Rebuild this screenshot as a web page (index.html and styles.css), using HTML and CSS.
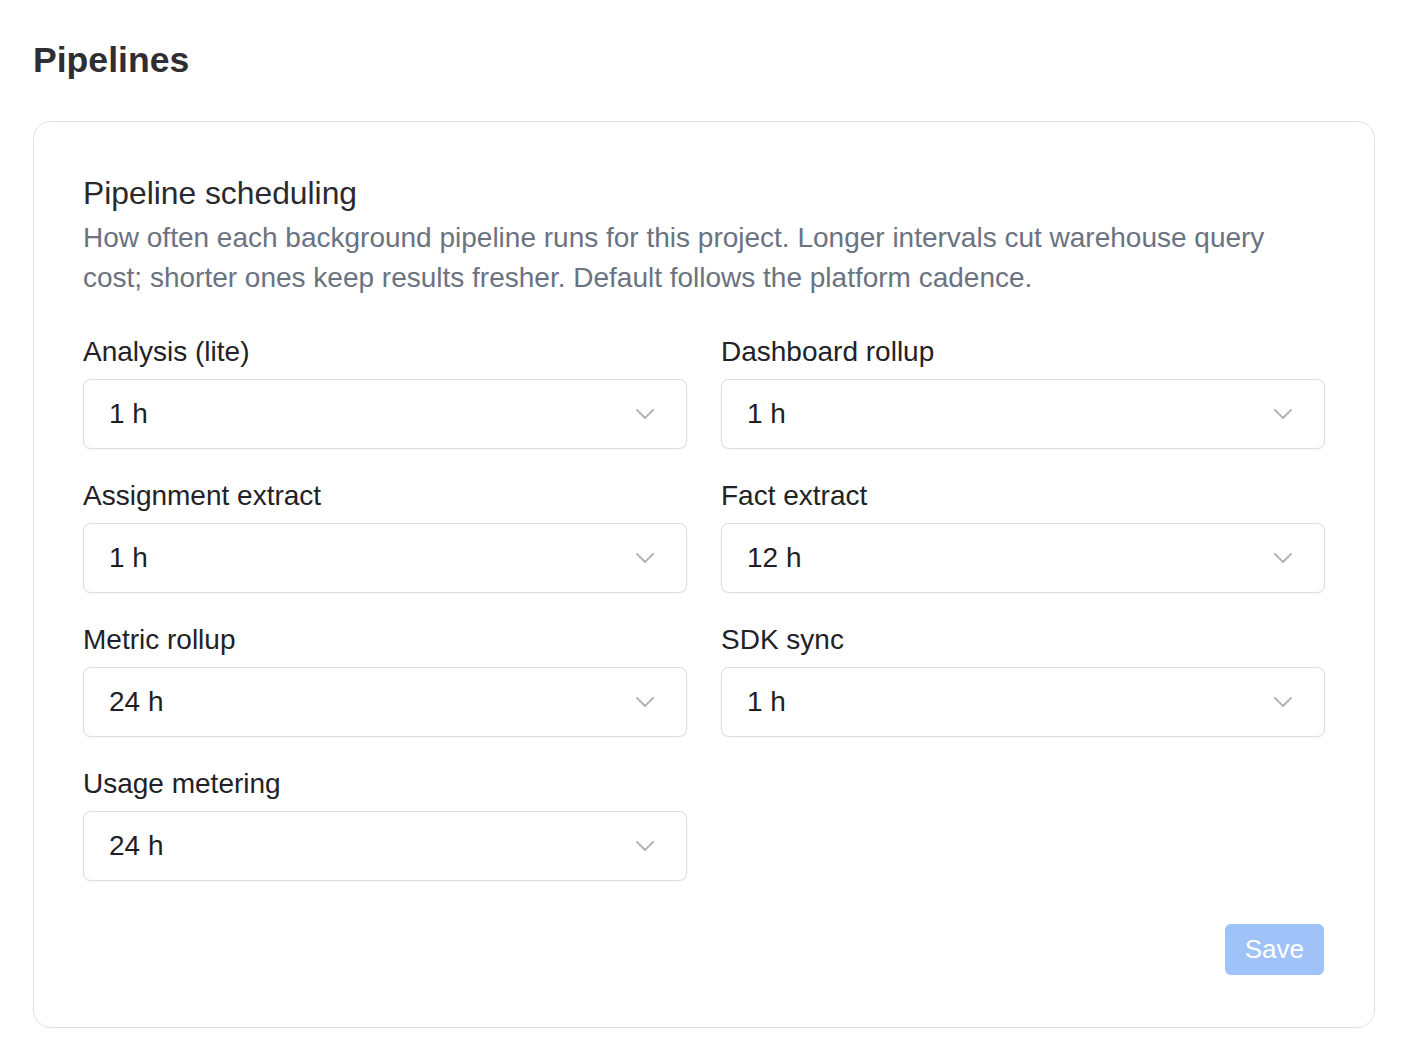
FILE: index.html
```html
<!DOCTYPE html>
<html lang="en">
<head>
<meta charset="utf-8">
<title>Pipelines</title>
<link rel="stylesheet" href="styles.css">
</head>
<body>
<main class="page">
  <h1 class="page-title">Pipelines</h1>

  <section class="card">
    <h2 class="card-title">Pipeline scheduling</h2>
    <p class="card-desc">How often each background pipeline runs for this project. Longer intervals cut warehouse query cost; shorter ones keep results fresher. Default follows the platform cadence.</p>

    <div class="fields">
      <div class="field">
        <label class="field-label">Analysis (lite)</label>
        <button class="select" type="button"><span>1 h</span><svg class="chev" viewBox="0 0 20 12" aria-hidden="true"><path d="M2 2l8 8 8-8"/></svg></button>
      </div>
      <div class="field">
        <label class="field-label">Dashboard rollup</label>
        <button class="select" type="button"><span>1 h</span><svg class="chev" viewBox="0 0 20 12" aria-hidden="true"><path d="M2 2l8 8 8-8"/></svg></button>
      </div>
      <div class="field">
        <label class="field-label">Assignment extract</label>
        <button class="select" type="button"><span>1 h</span><svg class="chev" viewBox="0 0 20 12" aria-hidden="true"><path d="M2 2l8 8 8-8"/></svg></button>
      </div>
      <div class="field">
        <label class="field-label">Fact extract</label>
        <button class="select" type="button"><span>12 h</span><svg class="chev" viewBox="0 0 20 12" aria-hidden="true"><path d="M2 2l8 8 8-8"/></svg></button>
      </div>
      <div class="field">
        <label class="field-label">Metric rollup</label>
        <button class="select" type="button"><span>24 h</span><svg class="chev" viewBox="0 0 20 12" aria-hidden="true"><path d="M2 2l8 8 8-8"/></svg></button>
      </div>
      <div class="field">
        <label class="field-label">SDK sync</label>
        <button class="select" type="button"><span>1 h</span><svg class="chev" viewBox="0 0 20 12" aria-hidden="true"><path d="M2 2l8 8 8-8"/></svg></button>
      </div>
      <div class="field">
        <label class="field-label">Usage metering</label>
        <button class="select" type="button"><span>24 h</span><svg class="chev" viewBox="0 0 20 12" aria-hidden="true"><path d="M2 2l8 8 8-8"/></svg></button>
      </div>
    </div>

    <div class="actions">
      <button class="btn-save" type="button" disabled>Save</button>
    </div>
  </section>
</main>
</body>
</html>
```

FILE: styles.css
```css
* {
  box-sizing: border-box;
}

html,
body {
  margin: 0;
  padding: 0;
  background: #ffffff;
}

body {
  font-family: "Liberation Sans", Arial, Helvetica, sans-serif;
  color: #222226;
}

.page {
  padding: 40px 33px 0 33px;
}

.page-title {
  margin: 0 0 41px 0;
  font-size: 35.6px;
  line-height: 40px;
  font-weight: 700;
  color: #2f2f33;
}

.card {
  border: 1px solid #e0e0e6;
  border-radius: 18px;
  padding: 49px 49px 52px 49px;
  background: #ffffff;
}

.card-title {
  margin: 0;
  font-size: 31.8px;
  line-height: 44px;
  font-weight: 400;
  color: #2a2a2e;
}

.card-desc {
  margin: 3px 0 0 0;
  font-size: 28px;
  line-height: 40px;
  color: #6b7280;
}

.fields {
  display: grid;
  grid-template-columns: 1fr 1fr;
  column-gap: 34px;
  row-gap: 30px;
  margin-top: 37px;
}

.field {
  display: flex;
  flex-direction: column;
  gap: 10px;
}

.field-label {
  font-size: 28px;
  line-height: 34px;
  color: #222226;
}

.select {
  display: flex;
  align-items: center;
  justify-content: space-between;
  width: 100%;
  height: 70px;
  padding: 0 31px 0 25px;
  border: 1px solid #dcdce2;
  border-radius: 8px;
  background: #ffffff;
  box-shadow: 0 1px 2px rgba(0, 0, 0, 0.05);
  font-family: inherit;
  font-size: 28px;
  color: #1f1f23;
  text-align: left;
  cursor: pointer;
}

.chev {
  width: 20px;
  height: 12px;
  fill: none;
  stroke: #b4b4bc;
  stroke-width: 2;
  stroke-linecap: round;
  stroke-linejoin: round;
}

.actions {
  display: flex;
  justify-content: flex-end;
  margin-top: 43px;
}

.btn-save {
  height: 51px;
  margin-right: 1px;
  padding: 0 20px;
  border: none;
  border-radius: 6px;
  background: #9fc3f8;
  color: #ffffff;
  font-family: inherit;
  font-size: 26px;
  line-height: 51px;
}
```
